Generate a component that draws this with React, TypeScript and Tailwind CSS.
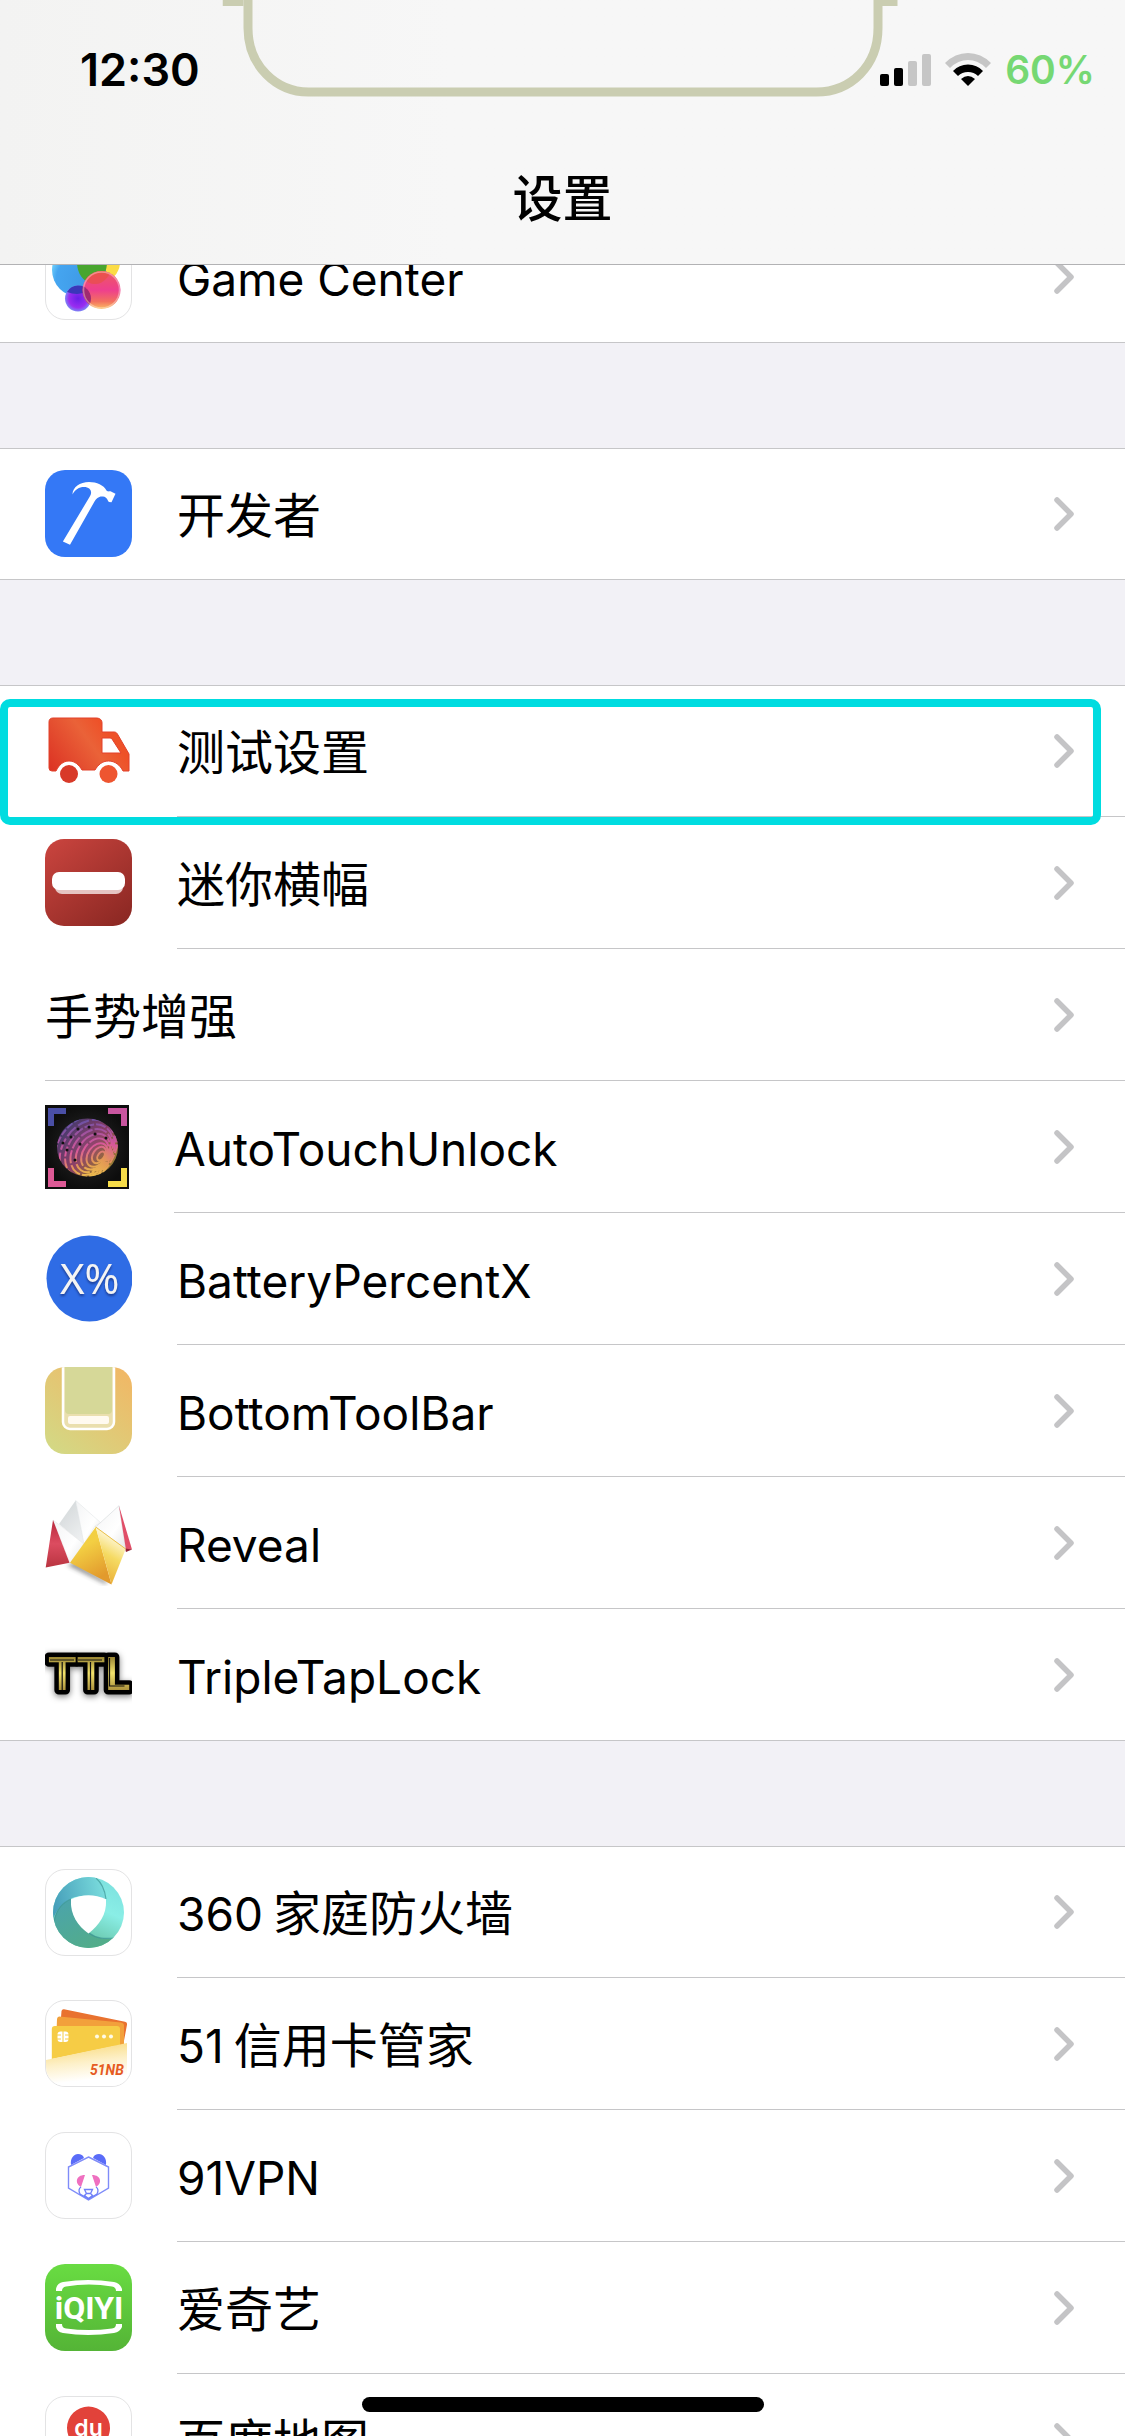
import type { ReactNode } from "react";

const svgBox = "mb-px block size-[87px]";

function Tile({ children }: { children: ReactNode }) {
  return (
    <span className="mb-px block size-[87px] overflow-hidden rounded-[20px] border border-[#e3e3e4] bg-white">
      <svg viewBox="1 1 85 85" className="block size-full" aria-hidden="true">
        {children}
      </svg>
    </span>
  );
}

function GameCenterIcon() {
  return (
    <Tile>
      <defs>
        <radialGradient id="gc-blue" cx="0.6" cy="0.7" r="0.7">
          <stop offset="0" stopColor="#3f9ae6" />
          <stop offset="0.75" stopColor="#45a5f0" />
          <stop offset="1" stopColor="#7bdcff" />
        </radialGradient>
        <linearGradient id="gc-pink" x1="0" y1="0" x2="0" y2="1">
          <stop offset="0" stopColor="#ee5a5e" />
          <stop offset="0.5" stopColor="#ee3f8e" />
          <stop offset="0.8" stopColor="#f3705f" />
          <stop offset="1" stopColor="#fbc064" />
        </linearGradient>
        <radialGradient id="gc-purple">
          <stop offset="0" stopColor="#6a1fe8" />
          <stop offset="0.7" stopColor="#9a2df0" />
          <stop offset="1" stopColor="#7c86f5" />
        </radialGradient>
        <clipPath id="gc-overlap">
          <circle cx="56.5" cy="57" r="19" />
        </clipPath>
      </defs>
      <circle cx="54" cy="29" r="21" fill="#fbdc46" />
      <circle cx="34" cy="37" r="27" fill="url(#gc-blue)" />
      <ellipse cx="47" cy="29" rx="15" ry="21" fill="#48a52f" />
      <circle cx="33" cy="65.5" r="13" fill="url(#gc-purple)" />
      <path d="M22 59a13 13 0 0 1 22 -1a27 27 0 0 1 -22 1z" fill="#3a37b9" />
      <circle cx="56.5" cy="57" r="19" fill="url(#gc-pink)" />
      <g clipPath="url(#gc-overlap)">
        <circle cx="33" cy="65.5" r="13" fill="#a02a72" />
        <ellipse cx="50" cy="30" rx="17" ry="21" fill="#e8503f" opacity="0.6" />
      </g>
      <circle cx="56.5" cy="57" r="18" fill="none" stroke="#fff" strokeOpacity="0.35" strokeWidth="1.5" />
    </Tile>
  );
}

function DeveloperIcon() {
  return (
    <svg viewBox="0 0 87 87" className={svgBox} aria-hidden="true">
      <rect width="87" height="87" rx="20" fill="#3478f6" />
      <path
        fill="#fff"
        d="M27.5 24.5C27.5 17 35 12 44 12c8 0 14.5 3 17.5 8.500 1.500 1.500 3 .5 4.500 1l4.500 2.300-4 8.500-2.500-.3c-1.500-1-1.500-5-6-5.500-4.500-.5-6.500 2-8.500 5L25 74.700 17.900 71.500 44.500 27C48 22 45.500 17 39 17c-5 0-9 2.500-11.500 7.500Z"
      />
    </svg>
  );
}

function TruckIcon() {
  return (
    <svg viewBox="0 0 87 87" className={svgBox} aria-hidden="true">
      <defs>
        <linearGradient id="truck" gradientUnits="userSpaceOnUse" x1="4" y1="60" x2="60" y2="20">
          <stop offset="0" stopColor="#dc3324" />
          <stop offset="0.7" stopColor="#ea6238" />
          <stop offset="1" stopColor="#ee5128" />
        </linearGradient>
      </defs>
      <path
        fill="url(#truck)"
        stroke="#e2402a"
        strokeWidth="1"
        fillRule="evenodd"
        d="M8 10h43c4 0 6 2 6 5v9h12c2 0 3 1 4 3l11 19v17h-6C75 57 70 53 63.5 53S53 57 50 62H37C34 57 30 53 24 53S14 57 11 63H7q-3 0-3-3V14c0-2.500 1.500-4 4-4Zm49 20v15h19l-9-14q-.6-1-2-1Z"
      />
      <circle cx="24" cy="66" r="9" fill="#d83a29" />
      <circle cx="63.5" cy="66" r="9" fill="#ee5530" />
    </svg>
  );
}

function BannerIcon() {
  return (
    <svg viewBox="0 0 87 87" className={svgBox} aria-hidden="true">
      <defs>
        <linearGradient id="banner" x1="0" y1="0" x2="0.8" y2="1">
          <stop offset="0" stopColor="#cb453f" />
          <stop offset="1" stopColor="#8e2924" />
        </linearGradient>
      </defs>
      <rect width="87" height="87" rx="19" fill="url(#banner)" />
      <rect x="10" y="40" width="68" height="15" rx="7" fill="#e6c4c2" />
      <rect x="7" y="33" width="73" height="18" rx="7" fill="#fff" />
    </svg>
  );
}

function FingerprintIcon() {
  return (
    <svg viewBox="0 0 84 84" className="mb-px block size-[84px]" aria-hidden="true">
      <defs>
        <linearGradient id="finger" gradientUnits="userSpaceOnUse" x1="16" y1="18" x2="70" y2="68">
          <stop offset="0" stopColor="#4d51a8" />
          <stop offset="0.3" stopColor="#a1529f" />
          <stop offset="0.52" stopColor="#d8589a" />
          <stop offset="0.75" stopColor="#e39a54" />
          <stop offset="1" stopColor="#f4dc48" />
        </linearGradient>
        <radialGradient id="finger-bg">
          <stop offset="0" stopColor="#2b2b2b" />
          <stop offset="1" stopColor="#0d0d0d" />
        </radialGradient>
        <clipPath id="finger-clip">
          <ellipse cx="42.5" cy="42.5" rx="30.5" ry="29" />
        </clipPath>
      </defs>
      <rect width="84" height="84" fill="url(#finger-bg)" />
      <path d="M3 21V3h18v6H9v12z" fill="#4a4fa6" />
      <path d="M63 3h19v18h-6V9H63z" fill="#c8559f" />
      <path d="M3 63h6v13h12v6H3z" fill="#dd5a96" />
      <path d="M76 63h6v19H63v-6h13z" fill="#f6dc49" />
      <g clipPath="url(#finger-clip)">
        <rect x="10" y="10" width="64" height="64" fill="url(#finger)" opacity="0.6" />
        <g fill="none" stroke="url(#finger)" strokeWidth="2">
          <ellipse cx="56" cy="51" rx="3" ry="5" transform="rotate(35 56 51)" />
          <ellipse cx="54" cy="50" rx="6" ry="9" transform="rotate(35 54 50)" />
          <ellipse cx="52" cy="50" rx="9" ry="13" transform="rotate(35 52 50)" />
          <ellipse cx="50" cy="49" rx="12" ry="17" transform="rotate(35 50 49)" strokeDasharray="24 2" />
          <ellipse cx="48" cy="48" rx="15" ry="21" transform="rotate(35 48 48)" strokeDasharray="17 2" />
          <ellipse cx="46" cy="47" rx="18" ry="25" transform="rotate(35 46 47)" strokeDasharray="13 2" />
          <ellipse cx="44" cy="46" rx="21" ry="29" transform="rotate(35 44 46)" strokeDasharray="10 2" />
          <ellipse cx="42" cy="45" rx="24" ry="33" transform="rotate(35 42 45)" strokeDasharray="12 3" />
          <ellipse cx="40" cy="44" rx="27" ry="37" transform="rotate(35 40 44)" strokeDasharray="7 2" />
          <ellipse cx="39" cy="43" rx="30" ry="40" transform="rotate(35 39 43)" strokeDasharray="9 2" />
        </g>
      </g>
      <g fill="#111">
        <circle cx="26" cy="32" r="1.5" />
        <circle cx="33" cy="24" r="1.5" />
        <circle cx="44" cy="22" r="1.5" />
        <circle cx="22" cy="45" r="1.5" />
        <circle cx="35" cy="39" r="1.5" />
        <circle cx="50" cy="29" r="1.5" />
        <circle cx="30" cy="55" r="1.5" />
        <circle cx="61" cy="33" r="1.5" />
        <circle cx="18" cy="38" r="1.5" />
      </g>
    </svg>
  );
}

function BatteryIcon() {
  return (
    <svg viewBox="0 0 87 87" className={svgBox} aria-hidden="true">
      <circle cx="44.5" cy="43.5" r="43" fill="#2f6ce5" />
      <text
        x="15"
        y="59"
        fontSize="42"
        fontFamily="'Noto Sans', sans-serif"
        fill="#f4f4f4"
        className="drop-shadow-[0_2px_1px_#1d3f96]"
      >
        X%
      </text>
    </svg>
  );
}

function ToolbarIcon() {
  return (
    <svg viewBox="0 0 87 87" className={svgBox} aria-hidden="true">
      <defs>
        <linearGradient id="toolbar" x1="0.1" y1="1" x2="0.9" y2="0">
          <stop offset="0" stopColor="#d3d985" />
          <stop offset="1" stopColor="#f1b765" />
        </linearGradient>
        <clipPath id="toolbar-clip">
          <rect width="87" height="87" rx="20" />
        </clipPath>
      </defs>
      <g clipPath="url(#toolbar-clip)">
        <rect width="87" height="87" fill="url(#toolbar)" />
        <rect x="18" y="-12" width="51" height="74" rx="7" fill="#eadfae" stroke="#fff" strokeWidth="2.5" />
        <rect x="20" y="-12" width="47" height="59" rx="4" fill="#d6d898" />
        <rect x="23" y="49" width="41" height="8" rx="2" fill="#fffaf0" />
      </g>
    </svg>
  );
}

function RevealIcon() {
  return (
    <svg viewBox="0 0 87 87" className={svgBox} aria-hidden="true">
      <defs>
        <linearGradient id="rv-red" x1="0" y1="0" x2="0" y2="1">
          <stop offset="0" stopColor="#b8283c" />
          <stop offset="0.5" stopColor="#dc4c60" />
          <stop offset="1" stopColor="#b93440" />
        </linearGradient>
        <linearGradient id="rv-gold" x1="0" y1="0" x2="0.4" y2="1">
          <stop offset="0" stopColor="#f0cf3e" />
          <stop offset="0.4" stopColor="#f3cf43" />
          <stop offset="1" stopColor="#e29a2d" />
        </linearGradient>
        <linearGradient id="rv-light" x1="0.6" y1="0" x2="0.3" y2="1">
          <stop offset="0.1" stopColor="#fffbe8" />
          <stop offset="0.5" stopColor="#f5da62" />
          <stop offset="1" stopColor="#e9aa33" />
        </linearGradient>
        <linearGradient id="rv-grey" x1="0" y1="0" x2="0.6" y2="1">
          <stop offset="0" stopColor="#cfd4d6" />
          <stop offset="1" stopColor="#eef0f1" />
        </linearGradient>
        <linearGradient id="rv-white" x1="0" y1="0" x2="1" y2="1">
          <stop offset="0" stopColor="#f3f4f5" />
          <stop offset="0.6" stopColor="#fff" />
          <stop offset="1" stopColor="#e6e7e8" />
        </linearGradient>
        <filter id="rv-blur" x="-20%" y="-50%" width="140%" height="200%">
          <feGaussianBlur stdDeviation="2" />
        </filter>
      </defs>
      <path d="M22 66l8-3 33 20-3 2z" fill="#555" opacity="0.6" filter="url(#rv-blur)" />
      <path d="M30.7 1.5L14 25l26 22z" fill="url(#rv-grey)" />
      <path d="M30.7 1.5L39 45l11-18 5.5-3.5z" fill="url(#rv-white)" stroke="#dfe2e4" strokeWidth="0.5" />
      <path d="M74 6.7L50.7 28l30 22z" fill="url(#rv-white)" stroke="#d9dcde" strokeWidth="0.7" />
      <path d="M74 6.7L87 50.500 81 51z" fill="#e04e68" />
      <path d="M80 49.5l7 1-6 2.5z" fill="#8f2233" />
      <path d="M8 21l31 24-14 19z" fill="url(#rv-white)" stroke="#e4e4e6" strokeWidth="0.5" />
      <path d="M8 21L.7 68.500 24.500 63.700z" fill="url(#rv-red)" />
      <path d="M50.7 28L25 63.700 66.500 85.500z" fill="url(#rv-gold)" />
      <path d="M50.7 28l30 22-14.200 35.500z" fill="url(#rv-light)" />
      <path d="M50.7 28l30 22" stroke="#ecc24a" strokeWidth="1" />
    </svg>
  );
}

function TtlIcon() {
  return (
    <svg viewBox="0 0 87 87" className={svgBox} aria-hidden="true">
      <defs>
        <linearGradient id="ttl" gradientUnits="userSpaceOnUse" x1="0" y1="24" x2="0" y2="60">
          <stop offset="0" stopColor="#8f7a2c" />
          <stop offset="0.5" stopColor="#f3e36c" />
          <stop offset="1" stopColor="#a88e3a" />
        </linearGradient>
      </defs>
      <text
        x="3"
        y="59"
        fontFamily="Roboto, sans-serif"
        fontWeight="700"
        fontSize="46"
        fill="url(#ttl)"
        stroke="#000"
        strokeWidth="9"
        strokeLinejoin="round"
        paintOrder="stroke"
        className="drop-shadow-[0_2px_3px_#00000080]"
      >
        TTL
      </text>
      <path d="M5 29h24M33 29h24M17.200 31v28M45.500 31v28M64.500 27v28h15" stroke="#111" strokeWidth="1.2" fill="none" />
    </svg>
  );
}

function ShieldIcon() {
  return (
    <Tile>
      <defs>
        <linearGradient id="shield" x1="0.8" y1="0.1" x2="0.4" y2="1">
          <stop offset="0.1" stopColor="#7fe3e0" />
          <stop offset="0.4" stopColor="#8aeee6" />
          <stop offset="1" stopColor="#56b08a" />
        </linearGradient>
        <linearGradient id="shield-top" x1="0" y1="0.5" x2="1" y2="0.3">
          <stop offset="0.1" stopColor="#459db9" />
          <stop offset="1" stopColor="#7cdede" />
        </linearGradient>
        <linearGradient id="shield-left" x1="0" y1="0" x2="0.6" y2="1">
          <stop offset="0" stopColor="#4aa3b0" />
          <stop offset="1" stopColor="#53ad87" />
        </linearGradient>
        <clipPath id="shield-clip">
          <circle cx="43.5" cy="43.5" r="35.5" />
        </clipPath>
      </defs>
      <g clipPath="url(#shield-clip)">
        <rect width="87" height="87" fill="url(#shield)" />
        <path d="M0 60V0h50v8.600c7 6 10 14 11 22-10-5-30-5-36 0-8 3-14 12-17 19.400Z" fill="url(#shield-top)" />
        <path d="M9 52c2-12 8-18 17-22 0 18 8 28 18 34 8 5 15 7 26 5V87H0V52Z" fill="url(#shield-left)" />
        <path d="M9 52c3-12 8-18 17-22M51 9c7 6 9 13 10 21M44 64c8 6 16 6 26 5" fill="none" stroke="#3c9494" strokeOpacity="0.7" strokeWidth="1.2" />
      </g>
      <path d="M26 30.300q17.500-8 35 0C62 46 54 56 43.500 64.500 33 57 25 46 26 30.300Z" fill="#fff" />
    </Tile>
  );
}

function CardIcon() {
  return (
    <Tile>
      <defs>
        <linearGradient id="card-fade" x1="0.3" y1="0" x2="0.5" y2="1">
          <stop offset="0" stopColor="#f9d977" />
          <stop offset="0.45" stopColor="#fdf0c8" />
          <stop offset="0.85" stopColor="#fff" />
        </linearGradient>
      </defs>
      <path d="M19 9.300l61 12.500q2.500.7 2 3L78 46 15 30l1.500-19q.5-2 2.500-1.700Z" fill="#e9722f" />
      <path d="M14 16.500l62 6q3 .5 3 3V46H11l1-27q0-2 2-2.500Z" fill="#f2a03b" />
      <path d="M10 26h62q3 0 3 3v16L6.800 59V29q0-3 3.200-3Z" fill="#f6cc45" />
      <path d="M1 60l81-17v44H1z" fill="url(#card-fade)" />
      <rect x="12.5" y="31.5" width="11" height="10.5" rx="3" fill="#fff" />
      <path d="M18 31v11M12 35h4M12 39h4M20 35h4M20 39h4" stroke="#f6cc45" strokeWidth="1" />
      <g fill="#fffbe6">
        <circle cx="52" cy="36.5" r="2" />
        <circle cx="59" cy="36.5" r="2" />
        <circle cx="66" cy="36.5" r="2" />
      </g>
      <text x="45" y="75" fontSize="14" fontWeight="700" fontStyle="italic" fontFamily="Roboto, sans-serif" fill="#e55b22">
        51NB
      </text>
    </Tile>
  );
}

function PandaIcon() {
  return (
    <Tile>
      <path d="M26 33c-1-7 3-11 7-11 3 0 5 1 6 4zM61 33c1-7-3-11-7-11-3 0-5 1-6 4z" fill="#5a6cf8" />
      <path d="M43.500 25l20 10v21l-20 12-20-12V35z" fill="#fff" stroke="#7f8cf9" strokeWidth="1.4" />
      <path d="M40 43l-4 12c-6-3-6-12 4-12ZM47 43l4 12c6-3 6-12-4-12Z" fill="#ef70c0" />
      <path
        d="M36 55c-3 2-2 5-1 7l8.500 5 8.500-5c1-2 2-5-1-7M39.500 57.500h8l-2 4h-4zM41.500 61.500l-2 2 4 3 4-3-2-2"
        fill="none"
        stroke="#7080f8"
        strokeWidth="1.3"
      />
    </Tile>
  );
}

function IqiyiIcon() {
  return (
    <svg viewBox="0 0 87 87" className={svgBox} aria-hidden="true">
      <defs>
        <linearGradient id="iqiyi" x1="0" y1="0" x2="0" y2="1">
          <stop offset="0" stopColor="#69dc42" />
          <stop offset="1" stopColor="#54b436" />
        </linearGradient>
      </defs>
      <rect width="87" height="87" rx="20" fill="url(#iqiyi)" />
      <path
        fill="#fff"
        d="M11 27v-2q1-6 7-7 25-4 51 0 6 1 8 7v2h-6q0-4-4-4.500-23-4-46 0-4 .5-4 4.500ZM11 60v3q1 5 7 6 25 4 51 0 6-1 8-6v-3h-6q0 4-4 4.500-23 3-46 0-4-.5-4-4.500Z"
      />
      <text
        x="44"
        y="55"
        textAnchor="middle"
        fontSize="32"
        fontWeight="700"
        fontFamily="Roboto, sans-serif"
        fill="#fff"
      >
        iQIYI
      </text>
    </svg>
  );
}

function BaiduIcon() {
  return (
    <Tile>
      <path d="M22 32a21.500 21.500 0 0 1 43 0c0 13-12 24-21.500 41C34 56 22 45 22 32Z" fill="#e2423a" />
      <text x="43.5" y="40" textAnchor="middle" fontSize="23" fontWeight="600" fontFamily="Inter, sans-serif" fill="#fff">
        du
      </text>
    </Tile>
  );
}

type Item = { latin?: string; han?: string; icon?: ReactNode };

const groups: { id: string; items: Item[]; highlight?: boolean }[] = [
  { id: "apple", items: [{ latin: "Game Center", icon: <GameCenterIcon /> }] },
  { id: "developer", items: [{ han: "开发者", icon: <DeveloperIcon /> }] },
  {
    id: "tweaks",
    highlight: true,
    items: [
      { han: "测试设置", icon: <TruckIcon /> },
      { han: "迷你横幅", icon: <BannerIcon /> },
      { han: "手势增强" },
      { latin: "AutoTouchUnlock", icon: <FingerprintIcon /> },
      { latin: "BatteryPercentX", icon: <BatteryIcon /> },
      { latin: "BottomToolBar", icon: <ToolbarIcon /> },
      { latin: "Reveal", icon: <RevealIcon /> },
      { latin: "TripleTapLock", icon: <TtlIcon /> },
    ],
  },
  {
    id: "apps",
    items: [
      { latin: "360", han: "家庭防火墙", icon: <ShieldIcon /> },
      { latin: "51", han: "信用卡管家", icon: <CardIcon /> },
      { latin: "91VPN", icon: <PandaIcon /> },
      { han: "爱奇艺", icon: <IqiyiIcon /> },
      { han: "百度地图", icon: <BaiduIcon /> },
    ],
  },
];

function Row({ latin, han, icon }: Item) {
  return (
    <li className="group h-[132px] first:h-[131px] last:h-[131px] only:h-[130px]">
      <a href="#" className="flex h-full items-center gap-[45px] pl-[45px]">
        {icon}
        <span className="flex h-full flex-1 items-center justify-between border-b border-[#c6c6c8] pr-[50px] group-last:border-b-0">
          <span className="flex items-baseline gap-2.5 pt-1 leading-[60px]">
            {latin && <span className="text-[46px]">{latin}</span>}
            {han && <span className="text-[48px]">{han}</span>}
          </span>
          <svg viewBox="0 0 22 36" className="h-9 w-[22px]" fill="none" aria-hidden="true">
            <path d="M4 4l14 14L4 32" stroke="#c4c4c6" strokeWidth="5.5" strokeLinecap="round" strokeLinejoin="round" />
          </svg>
        </span>
      </a>
    </li>
  );
}

function Notch() {
  return (
    <svg
      viewBox="0 0 681 97"
      className="absolute top-0 left-1/2 h-[97px] w-[681px] -translate-x-1/2"
      fill="none"
      aria-hidden="true"
    >
      <path d="M0 3h21M657 3h18" stroke="#cacdb1" strokeWidth="6" />
      <path d="M25.500 0v28C25.500 66 54 92 86 92H594C628 92 655.500 66 655.500 28V0" stroke="#cacdb1" strokeWidth="9" />
    </svg>
  );
}

function Header() {
  return (
    <header className="relative z-10 shrink-0 border-b border-[#b2b2b4] bg-linear-to-r from-[#f3f3f2] to-[#f7f7f7] to-40%">
      <Notch />
      <div className="flex h-[138px] items-center justify-between pr-[30px] pl-20">
        <time className="text-[45px] leading-none font-semibold">12:30</time>
        <div className="flex items-center gap-[14px]">
          <svg viewBox="0 0 51 33" className="h-[33px] w-[51px]" role="img" aria-label="信号">
            <rect x="0" y="21" width="9" height="12" rx="2" fill="#000" />
            <rect x="14" y="15" width="9" height="18" rx="2" fill="#000" />
            <rect x="28" y="8" width="9" height="25" rx="2" fill="#c6c6c6" />
            <rect x="42" y="1" width="9" height="32" rx="2" fill="#c6c6c6" />
          </svg>
          <svg viewBox="0 0 46 33" className="h-[33px] w-[46px]" role="img" aria-label="Wi-Fi">
            <path d="M0 10Q10 0 23 0T46 10L41 15Q33 7 23 7T5 15Z" fill="#c6c6c6" />
            <path d="M8 18Q14 11.500 23 11.500T38 18L33 23Q29 19 23 19T13 23Z" fill="#000" />
            <path d="M16 26q7-6 14 0l-7 7Z" fill="#000" />
          </svg>
          <span className="text-[39px] leading-none font-semibold text-[#76d873]">60%</span>
        </div>
      </div>
      <h1 className="flex h-[126px] items-center justify-center pb-1 text-[50px] leading-none font-medium">设置</h1>
    </header>
  );
}

export default function App() {
  return (
    <div className="relative flex h-screen flex-col overflow-hidden bg-[#f2f1f6] font-['Inter','Noto_Sans_CJK_SC',sans-serif] text-black">
      <Header />
      <main className="min-h-0 flex-1 overflow-y-auto [scrollbar-width:none]">
        <div className="-mt-[54px] flex flex-col gap-[105px]">
          {groups.map((group) => (
            <section key={group.id} className="relative">
              <ul className="border-y border-[#c6c6c8] bg-white">
                {group.items.map((item) => (
                  <Row key={`${item.latin}-${item.han}`} {...item} />
                ))}
              </ul>
              {group.highlight && (
                <div className="pointer-events-none absolute top-[14px] right-6 left-0 h-[126px] rounded-[10px] border-8 border-[#00dce0]" />
              )}
            </section>
          ))}
        </div>
      </main>
      <div className="absolute bottom-6 left-1/2 h-[15px] w-[402px] -translate-x-1/2 rounded-full bg-black" />
    </div>
  );
}
